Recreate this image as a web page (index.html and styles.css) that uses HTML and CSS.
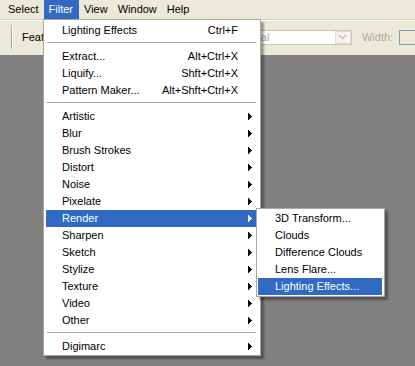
FILE: index.html
```html
<!DOCTYPE html>
<html>
<head>
<meta charset="utf-8">
<link rel="stylesheet" href="styles.css">
</head>
<body>
<div class="app">
  <div class="menubar">
    <span class="mb-item">Select</span>
    <span class="mb-item active">Filter</span>
    <span class="mb-item">View</span>
    <span class="mb-item">Window</span>
    <span class="mb-item">Help</span>
  </div>
  <div class="toolbar">
    <span class="tb-sep"></span>
    <span class="tb-label">Feather:</span>
    <span class="combo">
      <span class="combo-text">Normal</span>
      <span class="combo-btn"><svg width="9" height="6" viewBox="0 0 9 6"><path d="M1 1l3.5 3.5L8 1" fill="none" stroke="#c9c7ba" stroke-width="1.6"/></svg></span>
    </span>
    <span class="tb-label dim">Width:</span>
    <span class="field"></span>
  </div>
  <div class="workspace"></div>

  <div class="menu main">
    <div class="row"><span class="lbl">Lighting Effects</span><span class="key">Ctrl+F</span><span class="arr"></span></div>
    <div class="sep"></div>
    <div class="row"><span class="lbl">Extract...</span><span class="key">Alt+Ctrl+X</span><span class="arr"></span></div>
    <div class="row"><span class="lbl">Liquify...</span><span class="key">Shft+Ctrl+X</span><span class="arr"></span></div>
    <div class="row"><span class="lbl">Pattern Maker...</span><span class="key">Alt+Shft+Ctrl+X</span><span class="arr"></span></div>
    <div class="sep"></div>
    <div class="row"><span class="lbl">Artistic</span><span class="key"></span><span class="arr"><svg width="4" height="7"><path d="M0 0h1v7h-1zM1 1h1v5h-1zM2 2h1v3h-1zM3 3h1v1h-1z"/></svg></span></div>
    <div class="row"><span class="lbl">Blur</span><span class="key"></span><span class="arr"><svg width="4" height="7"><path d="M0 0h1v7h-1zM1 1h1v5h-1zM2 2h1v3h-1zM3 3h1v1h-1z"/></svg></span></div>
    <div class="row"><span class="lbl">Brush Strokes</span><span class="key"></span><span class="arr"><svg width="4" height="7"><path d="M0 0h1v7h-1zM1 1h1v5h-1zM2 2h1v3h-1zM3 3h1v1h-1z"/></svg></span></div>
    <div class="row"><span class="lbl">Distort</span><span class="key"></span><span class="arr"><svg width="4" height="7"><path d="M0 0h1v7h-1zM1 1h1v5h-1zM2 2h1v3h-1zM3 3h1v1h-1z"/></svg></span></div>
    <div class="row"><span class="lbl">Noise</span><span class="key"></span><span class="arr"><svg width="4" height="7"><path d="M0 0h1v7h-1zM1 1h1v5h-1zM2 2h1v3h-1zM3 3h1v1h-1z"/></svg></span></div>
    <div class="row"><span class="lbl">Pixelate</span><span class="key"></span><span class="arr"><svg width="4" height="7"><path d="M0 0h1v7h-1zM1 1h1v5h-1zM2 2h1v3h-1zM3 3h1v1h-1z"/></svg></span></div>
    <div class="row hl"><span class="lbl">Render</span><span class="key"></span><span class="arr"><svg width="4" height="7"><path d="M0 0h1v7h-1zM1 1h1v5h-1zM2 2h1v3h-1zM3 3h1v1h-1z"/></svg></span></div>
    <div class="row"><span class="lbl">Sharpen</span><span class="key"></span><span class="arr"><svg width="4" height="7"><path d="M0 0h1v7h-1zM1 1h1v5h-1zM2 2h1v3h-1zM3 3h1v1h-1z"/></svg></span></div>
    <div class="row"><span class="lbl">Sketch</span><span class="key"></span><span class="arr"><svg width="4" height="7"><path d="M0 0h1v7h-1zM1 1h1v5h-1zM2 2h1v3h-1zM3 3h1v1h-1z"/></svg></span></div>
    <div class="row"><span class="lbl">Stylize</span><span class="key"></span><span class="arr"><svg width="4" height="7"><path d="M0 0h1v7h-1zM1 1h1v5h-1zM2 2h1v3h-1zM3 3h1v1h-1z"/></svg></span></div>
    <div class="row"><span class="lbl">Texture</span><span class="key"></span><span class="arr"><svg width="4" height="7"><path d="M0 0h1v7h-1zM1 1h1v5h-1zM2 2h1v3h-1zM3 3h1v1h-1z"/></svg></span></div>
    <div class="row"><span class="lbl">Video</span><span class="key"></span><span class="arr"><svg width="4" height="7"><path d="M0 0h1v7h-1zM1 1h1v5h-1zM2 2h1v3h-1zM3 3h1v1h-1z"/></svg></span></div>
    <div class="row"><span class="lbl">Other</span><span class="key"></span><span class="arr"><svg width="4" height="7"><path d="M0 0h1v7h-1zM1 1h1v5h-1zM2 2h1v3h-1zM3 3h1v1h-1z"/></svg></span></div>
    <div class="sep"></div>
    <div class="row"><span class="lbl">Digimarc</span><span class="key"></span><span class="arr"><svg width="4" height="7"><path d="M0 0h1v7h-1zM1 1h1v5h-1zM2 2h1v3h-1zM3 3h1v1h-1z"/></svg></span></div>
  </div>

  <div class="menu sub">
    <div class="row"><span class="lbl">3D Transform...</span></div>
    <div class="row"><span class="lbl">Clouds</span></div>
    <div class="row"><span class="lbl">Difference Clouds</span></div>
    <div class="row"><span class="lbl">Lens Flare...</span></div>
    <div class="row hl"><span class="lbl">Lighting Effects...</span></div>
  </div>
</div>
</body>
</html>
```

FILE: styles.css
```css
html, body {
  margin: 0;
  padding: 0;
}
body {
  font-family: "Liberation Sans", Arial, sans-serif;
  font-size: 11px;
  color: #000;
  background: #808080;
}
.app {
  position: relative;
  width: 415px;
  height: 366px;
  overflow: hidden;
  display: flex;
  flex-direction: column;
}
.menubar {
  height: 19px;
  background: #ece9d8;
  display: flex;
  align-items: stretch;
  padding-left: 3px;
  flex: none;
}
.mb-item {
  padding: 0 5px;
  line-height: 19px;
}
.mb-item.active {
  background: #316ac5;
  color: #fff;
  padding: 0 6px 0 5px;
}
.toolbar {
  height: 36px;
  flex: none;
  background: #ece9d8;
  box-shadow: inset 0 1px 0 #d6d2c2, inset 0 2px 0 #fff;
  display: flex;
  align-items: center;
  padding-left: 11px;
  white-space: nowrap;
}
.tb-sep {
  width: 1px;
  height: 24px;
  background: #aca899;
  border-right: 1px solid #fff;
  margin-right: 9px;
  flex: none;
}
.tb-label {
  flex: none;
}
.tb-label.dim {
  color: #aca899;
  margin-left: 10px;
}
.combo {
  margin-left: 166px;
  width: 123px;
  height: 15px;
  flex: none;
  box-sizing: border-box;
  border: 1px solid #c9c7ba;
  background: #fff;
  display: flex;
  align-items: center;
  justify-content: space-between;
}
.combo-text {
  color: #aca899;
  padding-left: 4px;
}
.combo-btn {
  width: 16px;
  height: 13px;
  box-sizing: border-box;
  border: 1px solid #e2dfd3;
  background: #f4f3ee;
  display: flex;
  align-items: center;
  justify-content: center;
}
.field {
  margin-left: 6px;
  width: 40px;
  height: 15px;
  box-sizing: border-box;
  border: 1px solid #7f9db9;
  flex: none;
}
.workspace {
  flex: 1;
  background: #808080;
}
.menu {
  position: absolute;
  background: #fff;
  border: 1px solid #aca899;
  box-shadow: 3px 3px 2px rgba(0, 0, 0, 0.35);
}
.menu.main {
  left: 43px;
  top: 19px;
  padding: 2px 4px 0 2px;
  width: 210px;
}
.menu.sub {
  left: 256px;
  top: 208px;
  width: 124px;
  padding: 1px 2px 1px 1px;
}
.row {
  height: 17px;
  line-height: 17px;
  display: grid;
  grid-template-columns: 1fr auto 18px;
  padding-left: 16px;
  white-space: nowrap;
}
.sub .row {
  display: block;
  padding-left: 17px;
}
.row.hl {
  background: #316ac5;
  color: #fff;
}
.row.hl svg path {
  fill: #fff;
}
.arr {
  display: flex;
  align-items: center;
  justify-content: flex-end;
  padding-right: 4px;
}
.arr svg {
  display: block;
}
.sep {
  height: 1px;
  background: #aca899;
  margin: 3px 0 5px 1px;
}
```
